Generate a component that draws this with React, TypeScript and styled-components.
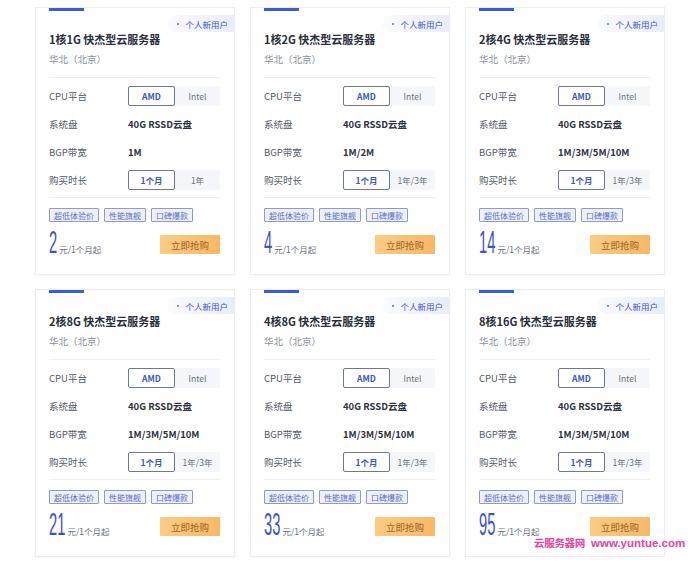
import styled, { createGlobalStyle } from 'styled-components'

const GlobalStyle = createGlobalStyle`
    body {
        margin: 0;
        background: #ffffff;
        font-family: 'Noto Sans CJK SC', 'Noto Sans', sans-serif;
    }
`

const Page = styled.div`
    position: relative;
    width: 700px;
    height: 563px;
    padding: 7px 0 0 35px;
    box-sizing: border-box;
`

const Grid = styled.div`
    display: grid;
    grid-template-columns: repeat(3, 200px);
    column-gap: 15px;
    row-gap: 14px;
`

const Card = styled.div`
    position: relative;
    height: 268px;
    box-sizing: border-box;
    border: 1px solid #eaedf2;
    background: #fff;
    padding: 0 14px 0 13px;
    box-shadow: 0 1px 3px rgba(30, 40, 80, 0.04);
`

const TopBar = styled.div`
    width: 35px;
    height: 3px;
    background: #3e5bd6;
`

const Badge = styled.div`
    position: absolute;
    top: 7px;
    right: 0;
    height: 17px;
    padding: 0 6px 0 10px;
    display: flex;
    align-items: center;
    gap: 6px;
    font-size: 8.5px;
    color: #3f55c8;
    border-radius: 9px 0 0 9px;
    background: linear-gradient(to left, #e8edfb, #f4f6fd 70%, rgba(244, 246, 253, 0.3));
    &::before {
        content: '';
        width: 2px;
        height: 2px;
        border-radius: 50%;
        background: #5d6fc9;
    }
`

const Title = styled.h3`
    margin: 19px 0 0;
    font-size: 11px;
    line-height: 18px;
    font-weight: bold;
    color: #2b2f3a;
`

const Region = styled.div`
    margin-top: 4px;
    font-size: 9.5px;
    line-height: 14px;
    color: #8a8f99;
`

const Divider = styled.div<{ $top: number }>`
    margin-top: ${p => p.$top}px;
    height: 1px;
    background: #eef0f4;
`

const Rows = styled.div`
    margin-top: 4px;
`

const Row = styled.div`
    display: flex;
    align-items: center;
    height: 28px;
`

const Label = styled.div`
    width: 79px;
    font-size: 9.5px;
    color: #555a66;
`

const Value = styled.div`
    font-size: 9.5px;
    font-weight: bold;
    color: #2f3440;
`

const Segmented = styled.div`
    display: flex;
    height: 20px;
    border-radius: 2px;
    background: #f4f6fa;
`

const Option = styled.div<{ $active?: boolean }>`
    width: ${p => (p.$active ? 47 : 45)}px;
    box-sizing: border-box;
    display: flex;
    align-items: center;
    justify-content: center;
    font-size: 8.5px;
    border-radius: 2px;
    font-weight: ${p => (p.$active ? 'bold' : 'normal')};
    color: ${p => (p.$active ? '#3f55c8' : '#6b717d')};
    background: ${p => (p.$active ? '#ffffff' : 'transparent')};
    border: 1px solid ${p => (p.$active ? '#6e7890' : 'transparent')};
`

const Tags = styled.div`
    margin-top: 10px;
    display: flex;
    gap: 5px;
`

const Tag = styled.span`
    height: 12px;
    padding: 0 4px;
    display: flex;
    align-items: center;
    font-size: 8px;
    color: #5a6dc4;
    background: #eef1fb;
    border: 1px solid #8e9bd2;
    border-radius: 1px;
`

const Footer = styled.div`
    margin-top: 7px;
    display: flex;
    justify-content: space-between;
    align-items: flex-end;
`

const Price = styled.div`
    display: flex;
    align-items: flex-end;
    height: 26px;
`

const Amount = styled.span<{ $digits: number }>`
    display: inline-block;
    font-family: 'Liberation Sans', sans-serif;
    font-size: 32px;
    line-height: 26px;
    height: 26px;
    color: #3b52d4;
    transform: scaleX(0.46);
    transform-origin: left bottom;
    margin-right: ${p => -p.$digits * 17.8 * 0.54 + 2}px;
`

const Unit = styled.span`
    font-size: 8.5px;
    line-height: 11px;
    color: #6b717d;
`

const BuyButton = styled.button`
    width: 60px;
    height: 19px;
    margin-bottom: 1px;
    border: none;
    border-radius: 1px;
    padding: 0;
    font-family: 'Noto Sans CJK SC', sans-serif;
    font-size: 9.5px;
    color: #9a6427;
    background: linear-gradient(to right, #fccb82, #f9b868);
`

const Watermark = styled.div`
    position: absolute;
    left: 534px;
    top: 535px;
    display: flex;
    align-items: center;
    gap: 6px;
    white-space: nowrap;
    font-weight: bold;
    color: #e8409c;
`

const MarkName = styled.span`
    font-family: 'Noto Sans CJK SC', sans-serif;
    font-size: 10.5px;
    letter-spacing: -0.3px;
`

const MarkUrl = styled.span`
    font-family: 'Liberation Sans', sans-serif;
    font-size: 11.5px;
`

type Plan = {
    spec: string
    bgp: string
    long: string
    price: string
}

const plans: Plan[] = [
    { spec: '1核1G', bgp: '1M', long: '1年', price: '2' },
    { spec: '1核2G', bgp: '1M/2M', long: '1年/3年', price: '4' },
    { spec: '2核4G', bgp: '1M/3M/5M/10M', long: '1年/3年', price: '14' },
    { spec: '2核8G', bgp: '1M/3M/5M/10M', long: '1年/3年', price: '21' },
    { spec: '4核8G', bgp: '1M/3M/5M/10M', long: '1年/3年', price: '33' },
    { spec: '8核16G', bgp: '1M/3M/5M/10M', long: '1年/3年', price: '95' },
]

const PlanCard = ({ plan }: { plan: Plan }) => (
    <Card>
        <TopBar />
        <Badge>个人新用户</Badge>
        <Title>{plan.spec} 快杰型云服务器</Title>
        <Region>华北（北京）</Region>
        <Divider $top={11} />
        <Rows>
            <Row>
                <Label>CPU平台</Label>
                <Segmented>
                    <Option $active>AMD</Option>
                    <Option>Intel</Option>
                </Segmented>
            </Row>
            <Row>
                <Label>系统盘</Label>
                <Value>40G RSSD云盘</Value>
            </Row>
            <Row>
                <Label>BGP带宽</Label>
                <Value>{plan.bgp}</Value>
            </Row>
            <Row>
                <Label>购买时长</Label>
                <Segmented>
                    <Option $active>1个月</Option>
                    <Option>{plan.long}</Option>
                </Segmented>
            </Row>
        </Rows>
        <Divider $top={3} />
        <Tags>
            <Tag>超低体验价</Tag>
            <Tag>性能旗舰</Tag>
            <Tag>口碑爆款</Tag>
        </Tags>
        <Footer>
            <Price>
                <Amount $digits={plan.price.length}>{plan.price}</Amount>
                <Unit>元/1个月起</Unit>
            </Price>
            <BuyButton>立即抢购</BuyButton>
        </Footer>
    </Card>
)

export default function App() {
    return (
        <Page>
            <GlobalStyle />
            <Grid>
                {plans.map((plan, index) => <PlanCard key={index} plan={plan} />)}
            </Grid>
            <Watermark>
                <MarkName>云服务器网</MarkName>
                <MarkUrl>www.yuntue.com</MarkUrl>
            </Watermark>
        </Page>
    )
}
